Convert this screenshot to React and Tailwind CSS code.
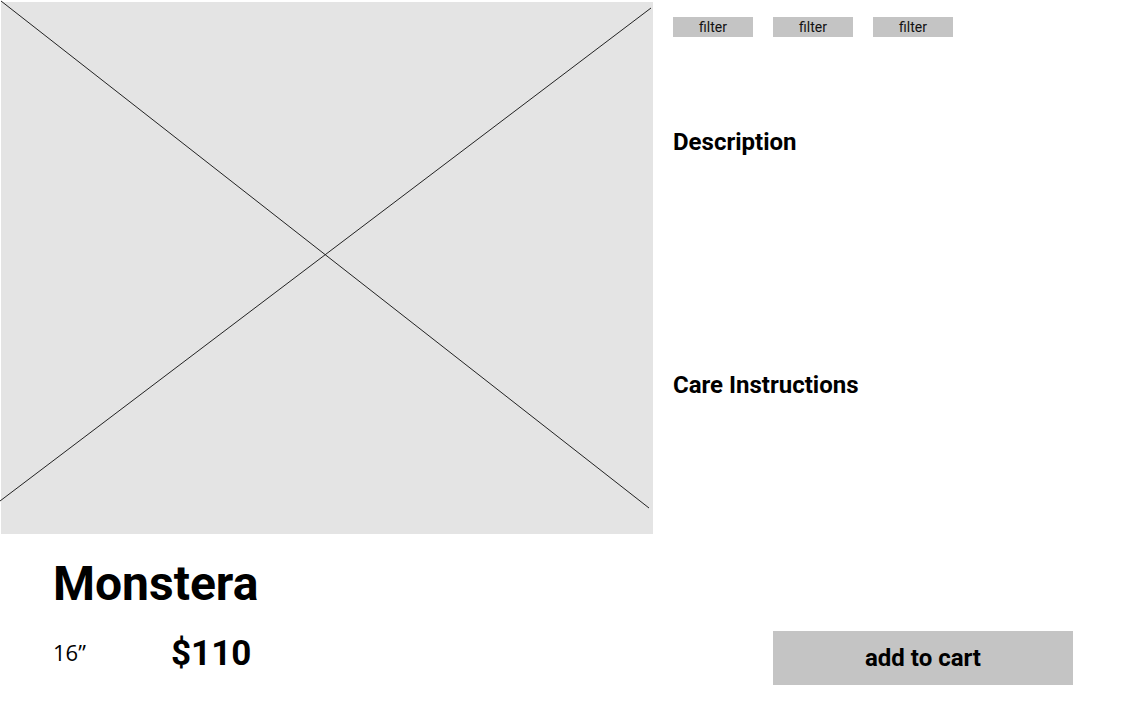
import React from 'react';

const filters = ['filter', 'filter', 'filter'];

function ImagePlaceholder() {
  return (
    <div className="relative ml-px mt-[2px] h-[532px] w-[652px] shrink-0 bg-[#e4e4e4]">
      <svg
        className="absolute inset-0 overflow-visible"
        width="652"
        height="532"
        viewBox="0 0 652 532"
      >
        <line x1="0" y1="-1" x2="648" y2="506" stroke="#222" strokeWidth="1" />
        <line x1="-1" y1="499" x2="650" y2="6" stroke="#222" strokeWidth="1" />
      </svg>
    </div>
  );
}

export default function App() {
  return (
    <div
      className="relative h-[721px] w-[1126px] overflow-hidden bg-white text-black"
      style={{ fontFamily: 'Roboto, "Liberation Sans", sans-serif' }}
    >
      {/* top: image + details */}
      <div className="flex">
        <ImagePlaceholder />

        <div className="flex flex-col pl-5 pt-[17px]">
          <div className="flex gap-5">
            {filters.map((f, i) => (
              <button
                key={i}
                className="flex h-5 w-20 items-center justify-center bg-[#c4c4c4] text-[14px] leading-none text-[#111]"
              >
                {f}
              </button>
            ))}
          </div>

          <h2 className="mt-[93px] text-[24px] font-bold leading-none">Description</h2>
          <h2 className="mt-[219px] text-[24px] font-bold leading-none">Care Instructions</h2>
        </div>
      </div>

      {/* bottom: name, size, price, cart */}
      <div className="pl-[53px] pr-[53px]">
        <h1 className="mt-[26px] text-[48px] font-bold leading-none">Monstera</h1>

        <div className="mt-[23px] flex items-start">
          <span
            className="mt-[10px] w-[118px] text-[22px] leading-none"
            style={{ fontFamily: '"Open Sans", sans-serif' }}
          >
            16”
          </span>
          <span className="mt-[5px] text-[35px] font-bold leading-none">$110</span>

          <button className="ml-auto flex h-[54px] w-[300px] items-center justify-center bg-[#c4c4c4] text-[24px] font-bold leading-none">
            add to cart
          </button>
        </div>
      </div>
    </div>
  );
}
